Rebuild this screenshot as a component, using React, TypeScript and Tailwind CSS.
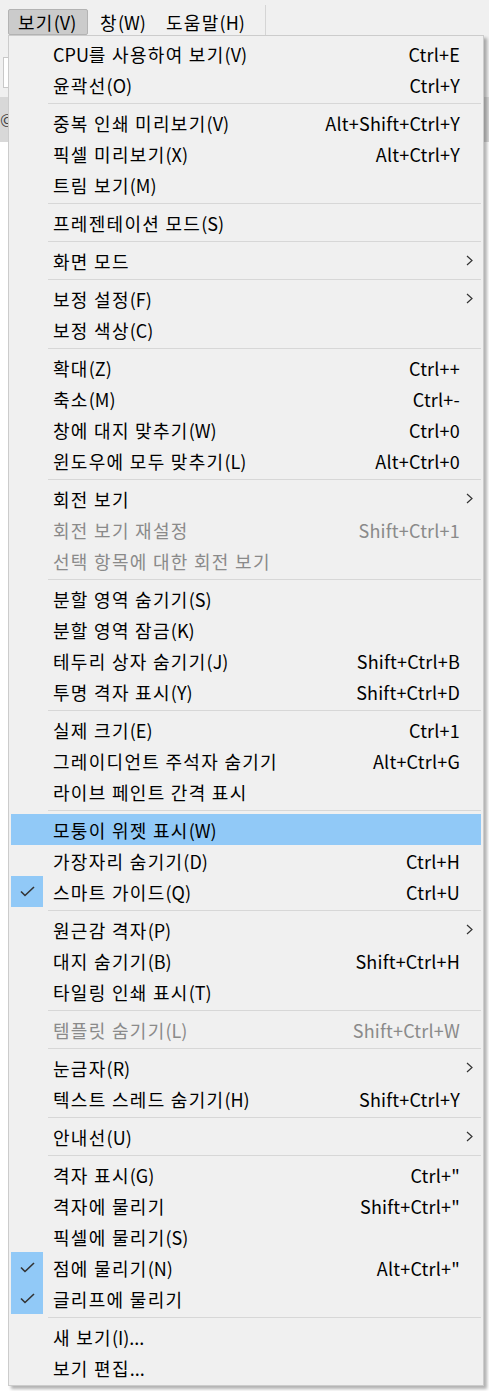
import React from "react";

type Item =
  | { sep: true }
  | {
      sep?: false;
      label: string;
      shortcut?: string;
      sub?: boolean;
      checked?: boolean;
      disabled?: boolean;
      active?: boolean;
    };

const items: Item[] = [
  { label: "CPU를 사용하여 보기(V)", shortcut: "Ctrl+E" },
  { label: "윤곽선(O)", shortcut: "Ctrl+Y" },
  { sep: true },
  { label: "중복 인쇄 미리보기(V)", shortcut: "Alt+Shift+Ctrl+Y" },
  { label: "픽셀 미리보기(X)", shortcut: "Alt+Ctrl+Y" },
  { label: "트림 보기(M)" },
  { sep: true },
  { label: "프레젠테이션 모드(S)" },
  { sep: true },
  { label: "화면 모드", sub: true },
  { sep: true },
  { label: "보정 설정(F)", sub: true },
  { label: "보정 색상(C)" },
  { sep: true },
  { label: "확대(Z)", shortcut: "Ctrl++" },
  { label: "축소(M)", shortcut: "Ctrl+-" },
  { label: "창에 대지 맞추기(W)", shortcut: "Ctrl+0" },
  { label: "윈도우에 모두 맞추기(L)", shortcut: "Alt+Ctrl+0" },
  { sep: true },
  { label: "회전 보기", sub: true },
  { label: "회전 보기 재설정", shortcut: "Shift+Ctrl+1", disabled: true },
  { label: "선택 항목에 대한 회전 보기", disabled: true },
  { sep: true },
  { label: "분할 영역 숨기기(S)" },
  { label: "분할 영역 잠금(K)" },
  { label: "테두리 상자 숨기기(J)", shortcut: "Shift+Ctrl+B" },
  { label: "투명 격자 표시(Y)", shortcut: "Shift+Ctrl+D" },
  { sep: true },
  { label: "실제 크기(E)", shortcut: "Ctrl+1" },
  { label: "그레이디언트 주석자 숨기기", shortcut: "Alt+Ctrl+G" },
  { label: "라이브 페인트 간격 표시" },
  { sep: true },
  { label: "모퉁이 위젯 표시(W)", active: true },
  { label: "가장자리 숨기기(D)", shortcut: "Ctrl+H" },
  { label: "스마트 가이드(Q)", shortcut: "Ctrl+U", checked: true },
  { sep: true },
  { label: "원근감 격자(P)", sub: true },
  { label: "대지 숨기기(B)", shortcut: "Shift+Ctrl+H" },
  { label: "타일링 인쇄 표시(T)" },
  { sep: true },
  { label: "템플릿 숨기기(L)", shortcut: "Shift+Ctrl+W", disabled: true },
  { sep: true },
  { label: "눈금자(R)", sub: true },
  { label: "텍스트 스레드 숨기기(H)", shortcut: "Shift+Ctrl+Y" },
  { sep: true },
  { label: "안내선(U)", sub: true },
  { sep: true },
  { label: "격자 표시(G)", shortcut: 'Ctrl+"' },
  { label: "격자에 물리기", shortcut: 'Shift+Ctrl+"' },
  { label: "픽셀에 물리기(S)" },
  { label: "점에 물리기(N)", shortcut: 'Alt+Ctrl+"', checked: true },
  { label: "글리프에 물리기", checked: true },
  { sep: true },
  { label: "새 보기(I)..." },
  { label: "보기 편집..." },
];

function Label({ text }: { text: string }) {
  const parts = text.split(/([\uAC00-\uD7A3 ]+)/).filter((p) => p.length > 0);
  return (
    <>
      {parts.map((p, i) =>
        /[\uAC00-\uD7A3 ]/.test(p[0]) ? (
          <span key={i} className="tracking-[1.3px]">
            {p}
          </span>
        ) : (
          <span key={i}>{p}</span>
        )
      )}
    </>
  );
}

function Check() {
  return (
    <svg width="15" height="11" viewBox="0 0 15 11" fill="none">
      <path d="M1 5.5 L5 9.5 L14 1" stroke="#333" strokeWidth="1.6" />
    </svg>
  );
}

function Chevron() {
  return (
    <svg width="7" height="11" viewBox="0 0 7 11" fill="none">
      <path d="M1 1 L6 5.5 L1 10" stroke="#333" strokeWidth="1.2" />
    </svg>
  );
}

export default function App() {
  return (
    <div className="relative w-[489px] h-[1391px] overflow-hidden bg-white font-['Noto_Sans_CJK_KR',sans-serif] text-[18px] text-black">
      {/* menubar */}
      <div className="relative flex h-[35px] items-start bg-[#f0f0f0]">
        <div className="ml-[8px] mt-[9px] flex h-[26px] w-[80px] items-center whitespace-nowrap rounded-[2px] border border-[#b3b3b3] bg-[#cbcbcb] pl-[9px] leading-none">
          <Label text="보기(V)" />
        </div>
        <div className="mt-[9px] flex h-[26px] w-[78px] items-center whitespace-nowrap pl-[12px] leading-none">
          <Label text="창(W)" />
        </div>
        <div className="mt-[9px] flex h-[26px] w-[99px] items-center whitespace-nowrap leading-none">
          <Label text="도움말(H)" />
        </div>
        <div className="mt-[5px] h-[30px] w-px bg-[#d5d5d5]" />
      </div>

      {/* background toolbar area */}
      <div className="flex h-[62px] items-start bg-[#f0f0f0]">
        <div className="ml-[3px] mt-[22px] h-[31px] w-[40px] border border-[#c8c8c8] bg-white" />
      </div>
      <div className="flex h-[45px] items-center bg-[#d8d8d8] text-[#444]">
        <span className="ml-0 text-[17px] leading-none">©</span>
      </div>

      {/* dropdown menu */}
      <div className="absolute left-[8px] top-[35px] w-[476px] border border-[#cccccc] bg-[#f0f0f0] px-[2px] py-[2px] shadow-[3px_3px_3px_rgba(0,0,0,0.3)]">
        {items.map((it, i) =>
          it.sep ? (
            <div key={i} className="flex h-[7px] items-center pl-[37px]">
              <div className="h-px flex-1 bg-[#d7d7d7]" />
            </div>
          ) : (
            <div
              key={i}
              className={`flex h-[31px] items-center leading-none ${it.active ? "bg-[#91c9f7]" : ""} ${
                it.disabled ? "text-[#8a8a8a]" : "text-black"
              }`}
            >
              <div className={`flex h-full w-[32px] items-center justify-center ${it.checked ? "bg-[#91c9f7]" : ""}`}>
                {it.checked ? <Check /> : null}
              </div>
              <div className="ml-[10px] flex-1 whitespace-nowrap">
                <Label text={it.label} />
              </div>
              {it.shortcut ? (
                <div className="mr-[21px] whitespace-nowrap tracking-[0.2px]">{it.shortcut}</div>
              ) : null}
              {it.sub ? (
                <div className="mr-[8px] flex w-[7px] items-center">
                  <Chevron />
                </div>
              ) : null}
            </div>
          )
        )}
      </div>
    </div>
  );
}
